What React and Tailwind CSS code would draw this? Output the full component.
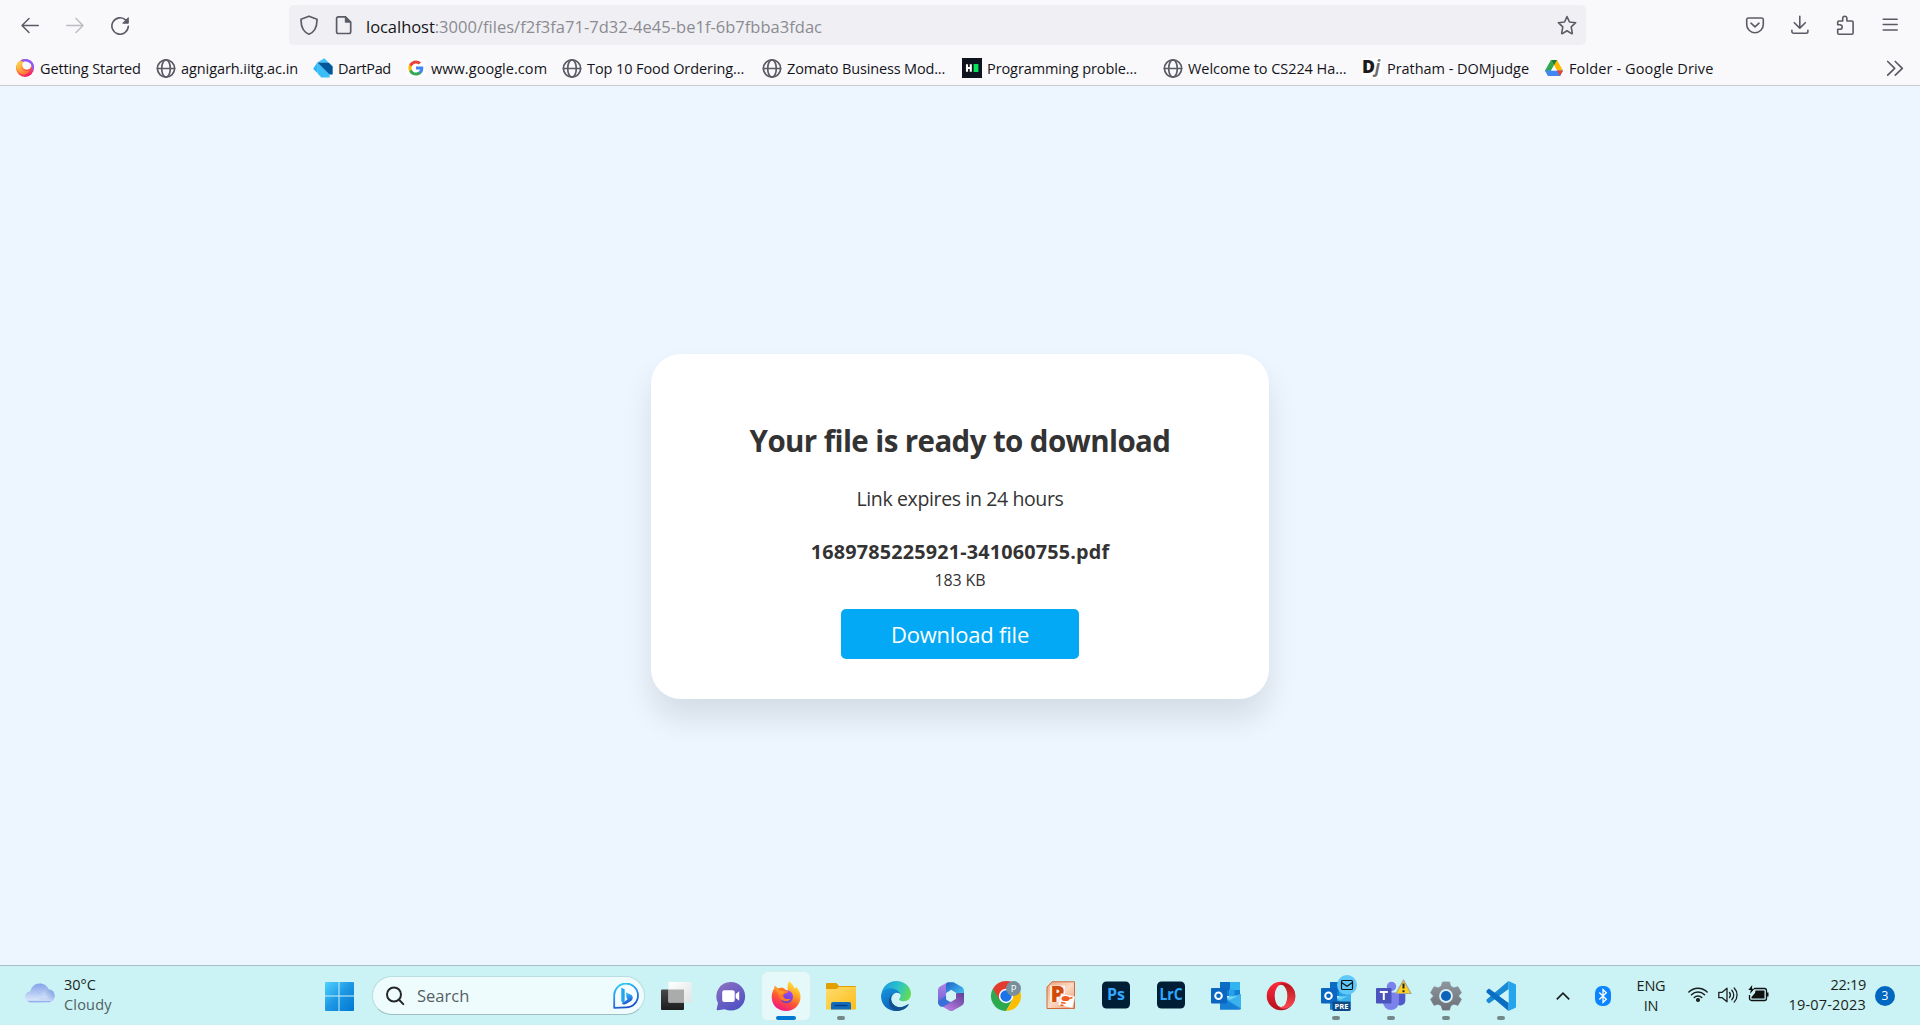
import React from "react";

/* ---------- browser chrome icons ---------- */
function Line({ children, className = "text-[#5b5b66]", w = 1.5 }) {
  return (
    <svg className={`size-5 shrink-0 ${className}`} viewBox="0 0 20 20" fill="none" stroke="currentColor" strokeWidth={w} strokeLinecap="round" strokeLinejoin="round">
      {children}
    </svg>
  );
}
const Back = () => (
  <Line><path d="M18.3 10.5H2M9 3.5l-7 7 7 7" /></Line>
);
const Forward = () => (
  <Line className="text-[#bdbdc3]"><path d="M1.7 10.5H18M11 3.5l7 7-7 7" /></Line>
);
const Reload = () => (
  <Line w={1.6}>
    <path d="M18.3 11.3a8.2 8.2 0 1 1-2.5-6.2" />
    <path d="M18.3 3v5.2h-5.2z" fill="currentColor" strokeWidth="1" />
  </Line>
);
const Shield = () => (
  <Line w={1.7}><path d="M10 1.2l8 3.1c.1 3.900-.4 7.400-2.300 10.300C14.300 16.800 12.300 18.400 10 19.200 7.700 18.400 5.700 16.800 4.300 14.600 2.400 11.700 1.900 8.200 2 4.300z" /></Line>
);
const Page = () => (
  <Line w={1.7}>
    <path d="M4.300 1.900H11.500L16.700 7v9.800a1.700 1.700 0 0 1-1.700 1.700H4.300a1.700 1.700 0 0 1-1.700-1.700V3.600a1.700 1.700 0 0 1 1.700-1.700z" />
    <path d="M11.300 2v5.200h5.300z" fill="currentColor" strokeWidth="1" />
  </Line>
);
const Star = () => (
  <Line w={1.6}><path d="M10 1.600l2.500 5.400 6.200.7-4.500 4.200 1.100 6.200c.1.500-.3.700-.7.500L10 15.800l-4.600 2.800c-.4.200-.8 0-.7-.5l1.100-6.200L1.300 7.700l6.200-.7z" /></Line>
);
const Pocket = () => (
  <Line w={1.6}>
    <path d="M3.300 3h13.400a1.600 1.600 0 0 1 1.600 1.600v4.800a8.300 8.300 0 0 1-16.600 0V4.600A1.600 1.600 0 0 1 3.300 3z" />
    <path d="M6 8.200l4 3.700 4-3.700" />
  </Line>
);
const Download = () => (
  <Line w={1.600}><path d="M9.800 1.200v11.600M4.300 7.700l5.500 5.400 5.500-5.400M1.900 15.200v1.300a1.700 1.700 0 0 0 1.700 1.700h12.600a1.700 1.700 0 0 0 1.700-1.700v-1.300" /></Line>
);
const Puzzle = () => (
  <Line w={1.600}><path d="M7.700 6V3.400a2.100 2.100 0 0 1 4.200 0V6h4.900a1.300 1.300 0 0 1 1.300 1.300v10.600a1.300 1.300 0 0 1-1.300 1.300H4a1.300 1.300 0 0 1-1.300-1.300v-3.600h2.200a2.300 2.300 0 0 0 0-4.600H2.700V7.300A1.300 1.300 0 0 1 4 6z" /></Line>
);
const Menu = () => (
  <Line w={1.500}><path d="M3.200 4.300h14M3.200 9.500h14M3.200 14.900h14" /></Line>
);
const Overflow = () => (
  <Line w={1.700}><path d="M2.700 3.500l7 6.800-7 6.900M10.300 3.500l7 6.800-7 6.900" /></Line>
);

/* ---------- bookmark icons ---------- */
const Globe = () => (
  <Line w={1.700}>
    <circle cx="10" cy="10.500" r="8.600" />
    <ellipse cx="10" cy="10.500" rx="4.300" ry="8.600" />
    <path d="M1.400 10.500h17.200" />
  </Line>
);
const FirefoxRing = () => (
  <svg className="size-5 shrink-0" viewBox="0 0 20 20">
    <defs>
      <linearGradient id="ffr" x1=".1" y1=".1" x2=".6" y2="1">
        <stop offset="0" stopColor="#ffb52e" /><stop offset=".5" stopColor="#ff7a2a" /><stop offset="1" stopColor="#f5156c" />
      </linearGradient>
      <linearGradient id="ffr2" x1="0" y1="0" x2="1" y2="1">
        <stop offset="0" stopColor="#ffe14a" /><stop offset="1" stopColor="#ff5a36" />
      </linearGradient>
    </defs>
    <circle cx="10" cy="10" r="9" fill="url(#ffr)" />
    <path d="M2 6C4 3 7 3 9 5c-2 1-3 3-2 5 1 3 5 4 8 2-2 5-8 6-11 2-2-2-3-5-2-8z" fill="url(#ffr2)" />
    <circle cx="11.800" cy="7" r="4.700" fill="#f9f9fb" />
    <path d="M5.500 2.200C10.500-.5 17.500 1.500 18.800 7c.6 3-.4 5.500-2.800 7 1.500-3 1.500-6.500-1-8.700C12.500 3.200 9.500 3.300 8.500 4z" fill="#9059ff" />
  </svg>
);
const Dart = () => (
  <svg className="size-5 shrink-0" viewBox="0 0 20 20">
    <path d="M4.200 4.500L10.500.8c.6-.4 1.200-.3 1.700.2l3.300 3.400z" fill="#40c4ff" />
    <path d="M.7 11.500c-.5-.7-.5-1 0-1.600L4.300 4.400V15z" fill="#29b6f6" />
    <path d="M4.200 4.500h10.300c1 0 1.500.3 2.200.9l3 3v8h-3.600z" fill="#01579b" />
    <path d="M4.200 4.500v9c0 1.300.3 1.900 1 2.700l3.200 3.300h8.200v-3z" fill="#3cbdf8" />
  </svg>
);
const GoogleG = () => (
  <svg className="size-5 shrink-0" viewBox="0 0 20 20">
    <rect x="1" y="1" width="18" height="18" rx="4" fill="#fff" />
    <g transform="translate(1.700 1.700) scale(.69)">
      <path fill="#4285f4" d="M22.560 12.250c0-.78-.07-1.530-.2-2.250H12v4.260h5.920c-.26 1.370-1.040 2.530-2.210 3.310v2.770h3.570c2.080-1.920 3.280-4.740 3.280-8.090z" />
      <path fill="#34a853" d="M12 23c2.970 0 5.460-.98 7.280-2.660l-3.570-2.770c-.98.66-2.230 1.060-3.710 1.060-2.860 0-5.290-1.930-6.160-4.530H2.180v2.840C3.990 20.530 7.700 23 12 23z" />
      <path fill="#fbbc05" d="M5.840 14.090c-.22-.66-.35-1.360-.35-2.090s.13-1.430.35-2.090V7.070H2.180C1.430 8.550 1 10.220 1 12s.43 3.450 1.180 4.930l3.660-2.840z" />
      <path fill="#ea4335" d="M12 5.380c1.620 0 3.060.56 4.210 1.640l3.150-3.150C17.450 2.090 14.970 1 12 1 7.700 1 3.990 3.470 2.180 7.070l3.660 2.840c.87-2.600 3.300-4.530 6.160-4.530z" />
    </g>
  </svg>
);
const HackerRank = () => (
  <svg className="size-5 shrink-0" viewBox="0 0 20 20">
    <path fill="#0e141e" d="M0 0h20v20H0z" />
    <path d="M5 6.200v7.600M8.800 6.200v7.600M5 10h4" stroke="#fff" strokeWidth="2.100" />
    <path fill="#05e35e" d="M11.600 6h4.800v8h-4.800z" />
  </svg>
);
const DomJudge = () => (
  <svg className="size-5 shrink-0 overflow-visible" viewBox="0 0 20 20">
    <path fill="#fff" d="M0 0h20v20H0z" />
    <text x="0" y="15" className="font-['Open_Sans'] text-[18px] font-extrabold" fill="#1d1a1c" textLength="13" lengthAdjust="spacingAndGlyphs">D</text>
    <text x="13" y="15" className="font-['Open_Sans'] text-[17px] font-bold italic" fill="#6d6d70">j</text>
  </svg>
);
const Drive = () => (
  <svg className="size-5 shrink-0" viewBox="0 0 20 20">
    <path d="M7 2h6l6 10.600h-6L7 2z" fill="#ffba00" />
    <path d="M7 2l3 5.300L4.200 17.800 1 12.600z" fill="#2fa84f" />
    <path d="M1 12.600h18L16 18H4z" fill="#4285f4" />
    <path d="M13 12.600h6L16 18z" fill="#ea4335" />
    <path d="M10 7.500l2.900 5H7.200z" fill="#fff" />
    <path d="M7 2h6L10 7.300z" fill="#188038" />
  </svg>
);

const bookmarks = [
  { label: "Getting Started", icon: FirefoxRing, cls: "w-[141px] tracking-[-0.120px]" },
  { label: "agnigarh.iitg.ac.in", icon: Globe, cls: "w-[157px] tracking-[-0.080px]" },
  { label: "DartPad", icon: Dart, cls: "w-[93px] tracking-[-0.350px]" },
  { label: "www.google.com", icon: GoogleG, cls: "w-[156px] tracking-[0.050px]" },
  { label: "Top 10 Food Ordering...", icon: Globe, cls: "w-[200px] tracking-[-0.090px]" },
  { label: "Zomato Business Mod...", icon: Globe, cls: "w-[200px] tracking-[-0.160px]" },
  { label: "Programming proble...", icon: HackerRank, cls: "w-[201px] tracking-[-0.090px]" },
  { label: "Welcome to CS224 Ha...", icon: Globe, cls: "w-[199px] tracking-[-0.060px]" },
  { label: "Pratham - DOMjudge", icon: DomJudge, cls: "w-[182px] tracking-[-0.040px]" },
  { label: "Folder - Google Drive", icon: Drive, cls: "w-[172px] tracking-[0.120px]" },
];

/* ---------- taskbar icons ---------- */
function App30({ children }) {
  return <svg className="size-[30px] shrink-0 overflow-visible" viewBox="0 0 30 30">{children}</svg>;
}
const Cloud = () => (
  <svg className="h-5 w-[30px] shrink-0" viewBox="0 0 30 20">
    <defs>
      <linearGradient id="cl1" x1="0" y1="0" x2="0" y2="1"><stop offset="0" stopColor="#86a3e8" /><stop offset="1" stopColor="#c3d5f7" /></linearGradient>
      <linearGradient id="cl2" x1="1" y1="0" x2="0" y2="1"><stop offset="0" stopColor="#6f93dc" /><stop offset=".6" stopColor="#c2d4f5" /><stop offset="1" stopColor="#d4e2fb" /></linearGradient>
      <linearGradient id="cl3" x1="0" y1="0" x2="0" y2="1"><stop offset="0" stopColor="#a9c0f0" /><stop offset=".8" stopColor="#d8e5fb" /><stop offset="1" stopColor="#8fb0ec" /></linearGradient>
    </defs>
    <path d="M5 9C6 3.500 10 .4 14.500.4S23 3 24 7.500L22 14H6z" fill="url(#cl1)" />
    <circle cx="23.300" cy="12.800" r="6.500" fill="url(#cl2)" />
    <path d="M6 8.300c3.500-.6 6.500 1 7.500 3.700 1.500-1 3-1 4.500.3 2.500 2.200 1.500 7-1.500 7H6.200C2.500 19.300.2 17 .2 13.800S2.500 8.800 6 8.300z" fill="url(#cl3)" />
    <path d="M14 13h8v6.300h-8z" fill="#c9daf7" />
    <path d="M4 18.600h21" stroke="#93b2ee" strokeWidth="1.200" strokeLinecap="round" />
  </svg>
);
const Windows = () => (
  <App30>
    <defs><linearGradient id="win" x1="0" y1="0" x2="1" y2="1"><stop offset="0" stopColor="#4fd3ff" /><stop offset=".5" stopColor="#1c96e4" /><stop offset="1" stopColor="#0078d4" /></linearGradient></defs>
    <path fill="url(#win)" d="M2 1H14.500v13.500H1V2a1 1 0 0 1 1-1zM15.500 1h13.500a1 1 0 0 1 1 1v12.500H15.500zM1 15.500H14.500V30H2a1 1 0 0 1-1-1zM15.500 15.500h14.500V29a1 1 0 0 1-1 1H15.500z" />
  </App30>
);
const Bing = () => (
  <svg className="size-[26px] shrink-0" viewBox="0 0 26 26">
    <defs><linearGradient id="bing" x1=".2" y1="0" x2=".6" y2="1"><stop offset="0" stopColor="#2bd0f5" /><stop offset=".5" stopColor="#2f8bf0" /><stop offset="1" stopColor="#1b4bc4" /></linearGradient></defs>
    <path d="M1.200 24.800V13A11.900 11.900 0 1 1 13 24.300z" fill="#f4fdff" stroke="url(#bing)" strokeWidth="1.800" strokeLinejoin="round" />
    <path d="M8.300 4.700l3.400 1.500v11.600l-1.500 2.200-1.900-1.600z" fill="#22a5f0" />
    <path d="M13 9.500l5 2.300c2.300 1.300 2.300 4.700 0 6.200l-5 3c-1.500.9-3.300.5-4.200-.8l5.700-3.700-1-2z" fill="url(#bing)" />
  </svg>
);
const TaskView = () => (
  <App30>
    <defs>
      <linearGradient id="tv1" x1="0" y1="0" x2="0" y2="1"><stop offset="0" stopColor="#484848" /><stop offset="1" stopColor="#1d1d1d" /></linearGradient>
      <linearGradient id="tv2" x1="0" y1="0" x2="1" y2="1"><stop offset="0" stopColor="#fff" /><stop offset="1" stopColor="#dfe3e4" /></linearGradient>
    </defs>
    <rect x="0" y="8.500" width="23" height="20.500" rx="1" fill="url(#tv1)" />
    <rect x="7.500" y="1" width="23" height="20.500" rx="1" fill="url(#tv2)" />
    <path d="M7.500 8.500H23v13H7.500z" fill="#aaacac" />
  </App30>
);
const Chat = () => (
  <App30>
    <defs><linearGradient id="chat" x1=".2" y1="0" x2=".8" y2="1"><stop offset="0" stopColor="#8a6fc2" /><stop offset="1" stopColor="#4c50c4" /></linearGradient></defs>
    <path d="M14.700 1a14.300 14.300 0 1 1-6 27.200L1.700 29.300c-.8.200-1.200-.4-1-1.100l1.300-6.100A14.300 14.300 0 0 1 14.700 1z" fill="url(#chat)" />
    <rect x="6.200" y="9.200" width="12.500" height="11.800" rx="2" fill="#fff" />
    <path d="M19.700 13l3.500-2.800v9.600L19.700 17z" fill="#fff" />
  </App30>
);
const Firefox = () => (
  <App30>
    <defs>
      <linearGradient id="ff1" x1=".8" y1="0" x2=".3" y2="1"><stop offset="0" stopColor="#fff14a" /><stop offset=".35" stopColor="#ffab26" /><stop offset=".65" stopColor="#ff5535" /><stop offset="1" stopColor="#f0128b" /></linearGradient>
      <linearGradient id="ff2" x1=".7" y1="0" x2=".3" y2="1"><stop offset="0" stopColor="#a04cf8" /><stop offset="1" stopColor="#5a3cd6" /></linearGradient>
    </defs>
    <path d="M18 0c3 2.500 5 5 5.500 7.500 1.500-.5 1.700-2 1.700-2 3 3.500 4.600 7.300 4.300 11.500C29 24 23 30 15.300 30 7 30 .7 24.500.7 16c0-3.500 1-6.500 2.800-9L3.800 4.500 7 7.500C8.700 6.500 11 6.500 12.800 7 14 8 15 9.500 17 10c-1-4-.5-7 1-10z" fill="url(#ff1)" />
    <circle cx="15.500" cy="15.700" r="6.500" fill="url(#ff2)" />
    <path d="M7 7.500c2-1.200 4.500-1 6.300.2 1 .8 1.800 2.500 4.200 2.800-1 2-3.500 1.700-4.500 2.800-1.500 1.400-.5 3.700 1.800 4.500 1.900.7 3.200 0 4.800.3-1.700 2.500-5.500 3-8.600 1.200C7.500 17.300 6 12 7 7.500z" fill="#ff7a28" />
    <path d="M3.500 7.500L4 5l4.500 4.500 6 1-3 2.500-3 .5z" fill="#ff9b28" />
  </App30>
);
const Folder = () => (
  <App30>
    <defs><linearGradient id="fo" x1="0" y1="0" x2="1" y2="1"><stop offset="0" stopColor="#ffdc6e" /><stop offset="1" stopColor="#fbbd1a" /></linearGradient></defs>
    <path d="M1 2h9.500l2.500 3h16a1 1 0 0 1 1 1v8H0V3a1 1 0 0 1 1-1z" fill="#e2a000" />
    <path d="M0 8h10.500L13 6h17v21.500a1 1 0 0 1-1 1H1a1 1 0 0 1-1-1z" fill="url(#fo)" />
    <path d="M5 28.500V23a2 2 0 0 1 2-2h16a2 2 0 0 1 2 2v5.500z" fill="#0f6cbd" />
    <path d="M9 24.500h12" stroke="#0a3e78" strokeWidth="1.300" strokeLinecap="round" />
  </App30>
);
const Edge = () => (
  <App30>
    <defs>
      <linearGradient id="ed1" x1="0" y1=".3" x2="1" y2=".6"><stop offset="0" stopColor="#1b9de2" /><stop offset=".55" stopColor="#2cc5c5" /><stop offset="1" stopColor="#65dd4e" /></linearGradient>
      <linearGradient id="ed2" x1="0" y1="0" x2=".6" y2="1"><stop offset="0" stopColor="#1596dd" /><stop offset="1" stopColor="#0a5bb4" /></linearGradient>
    </defs>
    <path d="M.5 12.500C1.800 5 8 0 15 0c8.500 0 15 6 15 12.500 0 5-3.500 8-7.500 8-3.500 0-5-1.500-4.500-2.700 1.500-1.500 1.800-2.800 1.500-4C18 7.500 6 6 .5 12.500z" fill="url(#ed1)" />
    <path d="M0 15C.3 10 4.500 7.200 9 7.200c5.500 0 10.300 3 10.500 6.500-1.200-1.500-3-2.200-5-1.700C10 13.500 8.500 20 13 24c4 3.500 9 2.500 14.500-1C25 27.500 20.500 30 15 30 6.500 30 0 23.500 0 15z" fill="url(#ed2)" />
    <path d="M12 12.800c-3.500 3-2.500 9.200 2.500 12.200 4.500 2.500 9 1 12.500-1.500.7-.4 1 0 .6.600-3 4.200-7 6-12.600 5.900C7.500 28 5.500 17 12 12.800z" fill="#14508f" />
    <path d="M12.500 15.500c.3-2.500 3-4 5-3.200 2 .8 2.500 3.500.6 5.500-.5 1.500 1.500 2.700 4.400 2.700 2 0 3.700-.7 5-1.700-.8 2.700-3.500 4-6.500 4-5 0-8.700-3.300-8.500-7.300z" fill="#d0f4f5" />
  </App30>
);
const M365 = () => (
  <App30>
    <defs>
      <linearGradient id="m1" x1="0" y1="0" x2="0" y2="1"><stop offset="0" stopColor="#b384e8" /><stop offset="1" stopColor="#6a5fd0" /></linearGradient>
      <linearGradient id="m2" x1="0" y1="0" x2="1" y2="1"><stop offset="0" stopColor="#1e5fc8" /><stop offset="1" stopColor="#4ad0f8" /></linearGradient>
      <linearGradient id="m3" x1="1" y1="0" x2="0" y2="1"><stop offset="0" stopColor="#5f3c94" /><stop offset="1" stopColor="#c98bf0" /></linearGradient>
    </defs>
    <path d="M11 1.500L4 5.600a4 4 0 0 0-2 3.500v11.800c0 1.500.8 2.600 2 3.300l6.200-4V12l5-3z" fill="url(#m1)" />
    <path d="M11.500 1.200h6l8.500 4.900a4 4 0 0 1 2 3.500V16l-8.500-4.500L15 8.800l-5 3.200V3.500z" fill="url(#m2)" />
    <path d="M28 12v9a4 4 0 0 1-2 3.400l-8.800 5a4 4 0 0 1-4 0L4 24.200l10.500-3.500 5.300-3.200v-5.200z" fill="url(#m3)" />
    <path d="M2 20.500l8.200-6v4.300l4.600 2.500-6.800 4c-3 1.500-6-.8-6-4.800z" fill="#3a6fd8" />
    <path d="M15 9.300l5 3v5.500l-5 3-4.800-3v-5.500z" fill="#d3f4f5" />
  </App30>
);
const Chrome = () => (
  <App30>
    <path d="M2 7.500A15 15 0 0 0 15 30l6.500-11.300L15 15z" fill="#2da94f" />
    <path d="M28 7.500H15V15l6.500 3.700L15 30A15 15 0 0 0 28 7.500z" fill="#fdbd00" />
    <path d="M2 7.500A15 15 0 0 1 28 7.500H15L8.500 18.700z" fill="#e33b2e" />
    <circle cx="15" cy="15" r="7.200" fill="#fff" />
    <circle cx="15" cy="15" r="5.700" fill="#1a73e8" />
    <circle cx="22.500" cy="7.500" r="7.500" fill="#78909c" />
    <text x="22.500" y="11" textAnchor="middle" fill="#fff" className="font-['Open_Sans'] text-[9.500px]">P</text>
  </App30>
);
const PowerPoint = () => (
  <App30>
    <defs><linearGradient id="pp" x1="0" y1="0" x2="1" y2="1"><stop offset="0" stopColor="#f3a27c" /><stop offset=".5" stopColor="#fbd9c3" /><stop offset="1" stopColor="#ee9366" /></linearGradient></defs>
    <path d="M6 .8h22.500v26.700H1V6z" fill="url(#pp)" stroke="#cf6a3c" strokeWidth="1" />
    <path d="M4 4.500h15V21H4z" fill="#fff" opacity=".75" />
    <text x="4.500" y="20.500" fill="#d24a0c" className="font-['Open_Sans'] text-[22px] font-extrabold">P</text>
    <path d="M15 12.500l14 3-2.500 11.500-14.500-3z" fill="#fff" stroke="#f3c2a8" strokeWidth=".5" />
    <ellipse cx="19.500" cy="17.500" rx="4" ry="2.600" fill="#ee5a24" />
    <path d="M23 17.500l3.500-1M15 21.500l4.500.8M14.500 24l3 .5" stroke="#ee5a24" strokeWidth="1.600" />
  </App30>
);
const Photoshop = () => (
  <App30>
    <rect x="1" y=".5" width="28" height="27" rx="4.500" fill="#001e36" />
    <text x="6" y="18.500" textLength="18" lengthAdjust="spacingAndGlyphs" fill="#31a8ff" className="font-['Open_Sans'] text-[16px] font-bold">Ps</text>
  </App30>
);
const Lightroom = () => (
  <App30>
    <rect x="1" y=".5" width="28" height="27" rx="4.500" fill="#001e36" />
    <text x="3.500" y="18.500" textLength="23" lengthAdjust="spacingAndGlyphs" fill="#31a8ff" className="font-['Open_Sans'] text-[16px] font-bold">LrC</text>
  </App30>
);
const OutlookBase = () => (
  <>
    <path d="M9 1h20v14H9z" fill="#0f7fd8" />
    <path d="M16 1h13v8H16z" fill="#32b4ef" />
    <path d="M9 1h10v9H9z" fill="#0a6cc2" />
    <path d="M18 8.500h5.500v7H18z" fill="#28a0e8" />
    <path d="M9 13l10 6 11-6v14.500a1 1 0 0 1-1 1H9z" fill="#1a86dc" />
    <path d="M30 13v14.500L13 17z" fill="#4cc4f4" opacity=".7" />
    <path d="M9 28.500h20L9 17z" fill="#1580d6" />
    <rect x="0" y="7" width="16" height="15.500" rx="1" fill="#0a66c0" />
    <circle cx="7.500" cy="14.700" r="3.300" fill="none" stroke="#fff" strokeWidth="2" />
  </>
);
const Outlook = () => (<App30><OutlookBase /></App30>);
const Opera = () => (
  <App30>
    <defs>
      <linearGradient id="op1" x1="0" y1="0" x2="0" y2="1"><stop offset="0" stopColor="#ff2a3c" /><stop offset="1" stopColor="#b4101f" /></linearGradient>
      <linearGradient id="op2" x1="0" y1="0" x2="0" y2="1"><stop offset="0" stopColor="#b3141c" /><stop offset="1" stopColor="#ff4a50" /></linearGradient>
    </defs>
    <circle cx="15" cy="15" r="14.300" fill="url(#op1)" />
    <path d="M13 3.500C17 .5 29.300 3 29.300 15S17 29.500 13 26.500c4.500.5 8-4.500 8-11.500S17.500 3.500 13 3.500z" fill="url(#op2)" />
    <ellipse cx="15" cy="15" rx="6.300" ry="11.200" fill="#d2f5f4" />
  </App30>
);
const OutlookPre = () => (
  <App30>
    <OutlookBase />
    <rect x="11.500" y="20.500" width="18" height="9.500" rx="1" fill="#0f4a86" />
    <text x="13.500" y="28" textLength="14" lengthAdjust="spacingAndGlyphs" fill="#fff" className="font-['Open_Sans'] text-[7.500px] font-bold">PRE</text>
    <circle cx="26" cy="4" r="10" fill="#5fc9fb" />
    <rect x="20.500" y="-.5" width="11" height="9" rx="1" fill="none" stroke="#111" strokeWidth="1.200" />
    <path d="M20.500 1.500l5.500 3.700 5.500-3.700" fill="none" stroke="#111" strokeWidth="1.200" />
  </App30>
);
const Teams = () => (
  <App30>
    <circle cx="15.500" cy="5.500" r="4.700" fill="#7b83eb" />
    <path d="M20 11.500h9.300v8a5 5 0 0 1-9.300 2.500z" fill="#5059c9" />
    <path d="M7 11.500h16v9.500a8 8 0 0 1-16 0z" fill="#7b83eb" />
    <rect x="0" y="7" width="15.500" height="15.500" rx="1" fill="#4b53bc" />
    <path d="M3.800 11h8M7.800 11v8" stroke="#fff" strokeWidth="2" />
    <path d="M27.500-1L35 12.500H20z" fill="#ffd21f" stroke="#a9a793" strokeWidth="1.200" strokeLinejoin="round" />
    <path d="M27.500 2.500v5M27.500 9.200v2" stroke="#222" strokeWidth="2" />
  </App30>
);
const Settings = () => (
  <App30>
    <defs><linearGradient id="set" x1="0" y1="0" x2="0" y2="1"><stop offset="0" stopColor="#8f959c" /><stop offset="1" stopColor="#6c7178" /></linearGradient></defs>
    <path d="M11.500 1h7l1.200 4.200 3.200 1.700 4-1.200 3.500 6-3 3.300 3 3.300-3.500 6-4-1.200-3.200 1.700-1.200 4.200h-7l-1.200-4.200-3.200-1.700-4 1.200-3.500-6 3-3.300-3-3.300 3.500-6 4 1.200 3.200-1.700z" fill="url(#set)" strokeLinejoin="round" stroke="url(#set)" strokeWidth=".8" />
    <circle cx="15" cy="15" r="6.900" fill="#d8eef8" />
    <circle cx="15" cy="15" r="5" fill="#0c63b8" />
  </App30>
);
const VsCode = () => (
  <App30>
    <path d="M22.500 0L29 3a1.500 1.500 0 0 1 1 1.500v21a1.500 1.500 0 0 1-1 1.500l-6.500 3z" fill="#24a5ee" />
    <path d="M22.500 0v8.300L3 22.500.5 20.500v-2z" fill="#1a8ad4" />
    <path d="M22.500 30v-8.300L3 7.500.5 9.500v2z" fill="#0a6fc2" />
    <path d="M22.500 8.300v13.400L13.500 15z" fill="#d0f4f5" />
  </App30>
);

const apps = [
  [TaskView], [Chat], [Firefox, "active"], [Folder, "open"], [Edge], [M365], [Chrome], [PowerPoint],
  [Photoshop], [Lightroom], [Outlook], [Opera], [OutlookPre, "open"], [Teams, "open"], [Settings, "open"], [VsCode, "open"],
];

function TaskbarApp({ icon: Icon, state }) {
  const active = state === "active";
  return (
    <div className="flex w-[55px] justify-center">
      <div className={`relative flex size-12 justify-center rounded-md pt-[9px] ${active ? "bg-[#e6f9fa] ring-1 ring-[#d7eeee]" : ""}`}>
        <Icon />
        {state && <span className={`absolute bottom-0 h-1 rounded-full ${active ? "w-5 bg-[#0078d4]" : "w-2 bg-[#74888a]"}`} />}
      </div>
    </div>
  );
}

function Toolbar() {
  return (
    <div className="flex h-[50px] items-center pl-5">
      <div className="flex gap-[25px]"><Back /><Forward /><Reload /></div>
      <div className="ml-[159px] flex h-10 w-[1297px] items-center rounded-[5px] bg-[#f0f0f4] pl-[10px] pr-[9px]">
        <Shield />
        <div className="ml-[15px]"><Page /></div>
        <div className="ml-3 flex-1 pt-[3px] text-[16.5px] leading-6 text-[#8b8b91]">
          <span className="tracking-[-0.040px] text-[#15141a]">localhost</span>
          <span className="tracking-[0.020px]">:3000/files/f2f3fa71-7d32-4e45-be1f-6b7fbba3fdac</span>
        </div>
        <Star />
      </div>
      <div className="ml-[159px] flex gap-[25px]"><Pocket /><Download /><Puzzle /><Menu /></div>
    </div>
  );
}

function Bookmarks() {
  return (
    <div className="flex h-[35px] items-center pt-px pl-[15px] text-[14.5px] leading-5 text-[#15141a]">
      {bookmarks.map(({ label, icon: Icon, cls }) => (
        <div key={label} className={`flex shrink-0 items-center gap-[5px] whitespace-nowrap ${cls}`}>
          <Icon />
          <span className="-mb-0.5">{label}</span>
        </div>
      ))}
      <div className="mr-[15px] ml-auto"><Overflow /></div>
    </div>
  );
}

function DownloadCard() {
  return (
    <section className="flex h-[345px] w-[618px] flex-col items-center rounded-[30px] bg-white text-[#333] shadow-[0_20px_30px_rgba(0,20,0,0.1)]">
      <h1 className="mt-[67px] text-[29.500px] leading-10 font-bold tracking-[-0.600px]">Your file is ready to download</h1>
      <p className="mt-[23px] text-[19.500px] leading-[30px] tracking-[-0.370px]">Link expires in 24 hours</p>
      <p className="mt-[23px] text-[19.800px] leading-[30px] font-bold tracking-[0.190px]">1689785225921-341060755.pdf</p>
      <p className="mt-px text-base leading-6 tracking-[-0.100px]">183 KB</p>
      <button className="mt-[17px] h-[50px] w-[238px] rounded-[5px] bg-[#03a9f4] text-[22px] tracking-[-0.200px] text-white">Download file</button>
    </section>
  );
}

function Taskbar() {
  return (
    <footer className="flex h-[60px] items-center border-t border-[#a6bec6] bg-[#cbf3f5] text-[14.5px] leading-5 text-[#1b1f20]">
      <div className="flex w-[324px] items-center pl-[25px]">
        <div className="-mt-1.5"><Cloud /></div>
        <div className="ml-[9px] -mt-0.5">
          <div>30°C</div>
          <div className="tracking-[0.200px] text-[#51605f]">Cloudy</div>
        </div>
      </div>
      <Windows />
      <div className="ml-[18px] flex h-[39px] w-[273px] items-center rounded-full border border-[#b9dde0] border-b-[#9dbfc3] bg-[#effcfd] pr-[5px] pl-3">
        <svg className="size-5" viewBox="0 0 20 20" fill="none" stroke="#242627" strokeWidth="2" strokeLinecap="round"><circle cx="9" cy="8.500" r="7" /><path d="M14 13.800l4.300 4.300" /></svg>
        <span className="ml-3 flex-1 text-[16.500px] text-[#556163]">Search</span>
        <Bing />
      </div>
      <div className="ml-[3px] flex">
        {apps.map(([Icon, state], i) => <TaskbarApp key={i} icon={Icon} state={state} />)}
      </div>
      <div className="ml-7 flex items-center">
        <svg className="h-2 w-[14px]" viewBox="0 0 14 8" fill="none" stroke="#1b1f20" strokeWidth="1.700"><path d="M.8 7.300L7 1.200l6.200 6.100" /></svg>
        <svg className="ml-[25px] h-5 w-4" viewBox="0 0 16 20"><rect width="16" height="20" rx="7" fill="#0a84ff" /><path d="M4.300 6.500l7 6.800L8 16.500v-13l3.300 3.200-7 6.800" fill="none" stroke="#fff" strokeWidth="1.300" /></svg>
        <div className="ml-[25px] w-[30px] text-center tracking-[-0.200px]"><div>ENG</div><div>IN</div></div>
        <svg className="ml-[22px] -mt-1 h-[18px] w-5" viewBox="0 0 20 18" fill="none" stroke="#1b1f20" strokeWidth="1.500" strokeLinecap="round"><path d="M.9 7a13 13 0 0 1 18.200 0M3.500 9.800a9.200 9.200 0 0 1 13 0M6.300 12.500a5.300 5.300 0 0 1 7.400 0" /><circle cx="10" cy="15" r="1.300" fill="#1b1f20" /></svg>
        <svg className="ml-[10px] -mt-0.5 h-[18px] w-5" viewBox="0 0 20 18" fill="none" stroke="#1b1f20" strokeWidth="1.300" strokeLinecap="round" strokeLinejoin="round"><path d="M.8 6.300h3.400L9 2.200v13.600l-4.800-4.100H.8zM11.500 6.500a4 4 0 0 1 0 5M13.800 4.200a7 7 0 0 1 0 9.600M16.200 2a10 10 0 0 1 0 14" /></svg>
        <svg className="ml-[10px] -mt-1 h-[18px] w-[21px]" viewBox="0 0 21 18"><path d="M6 3.500h10.500a2 2 0 0 1 2 2v8a2 2 0 0 1-2 2h-13a2 2 0 0 1-2-2V10" fill="none" stroke="#111" strokeWidth="1.300" /><path d="M7.500 5.500h9v8h-13V12L7 8zM19 7.500h1.500v4H19z" fill="#111" /><path d="M4.200 0L.3 5h2.500l-.8 4L6.500 3.800H4z" fill="#111" /></svg>
        <div className="-mt-0.5 w-[97px] text-right"><div className="tracking-[-0.300px]">22:19</div><div className="tracking-[0.180px]">19-07-2023</div></div>
        <span className="ml-[9px] flex size-5 items-center justify-center rounded-full bg-[#0067c0] text-xs text-white">3</span>
      </div>
    </footer>
  );
}

export default function App() {
  return (
    <div className="flex h-[1025px] w-[1920px] flex-col overflow-hidden bg-[#edf5ff] font-['Open_Sans','Noto_Sans',sans-serif]">
      <header className="h-[86px] border-b border-[#cccccf] bg-[#f9f9fb]">
        <Toolbar />
        <Bookmarks />
      </header>
      <main className="flex flex-1 items-center justify-center pt-[2px]">
        <DownloadCard />
      </main>
      <Taskbar />
    </div>
  );
}
